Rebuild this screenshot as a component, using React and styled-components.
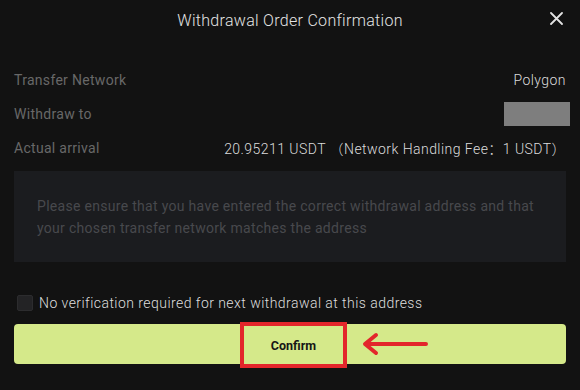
import React, { useState } from "react";
import styled, { createGlobalStyle } from "styled-components";

const GlobalStyle = createGlobalStyle`
  html, body {
    margin: 0;
    padding: 0;
    background: #121212;
  }
  body {
    font-family: "Roboto", "Noto Sans CJK SC", "Liberation Sans", sans-serif;
  }
`;

const rows = [
  { label: "Transfer Network", value: "Polygon" },
  { label: "Withdraw to", masked: true },
  {
    label: "Actual arrival",
    value: "20.95211 USDT （Network Handling Fee：1 USDT）",
  },
];

function App() {
  const [remember, setRemember] = useState(false);

  return (
    <>
      <GlobalStyle />
      <Dialog>
        <Header>
          <span />
          <Title>Withdrawal Order Confirmation</Title>
          <Close aria-label="close">
            <svg width="13" height="13" viewBox="0 0 13 13">
              <path
                d="M1 1 L12 12 M12 1 L1 12"
                stroke="#e2e2e2"
                strokeWidth="1.8"
                strokeLinecap="round"
              />
            </svg>
          </Close>
        </Header>

        <Rows>
          {rows.map((item) => (
            <Row key={item.label}>
              <Label>{item.label}</Label>
              {item.masked ? <Masked /> : <Value>{item.value}</Value>}
            </Row>
          ))}
        </Rows>

        <Notice>
          Please ensure that you have entered the correct withdrawal address and
          that your chosen transfer network matches the address
        </Notice>

        <CheckRow onClick={() => setRemember(!remember)}>
          <Box checked={remember} />
          <CheckText>
            No verification required for next withdrawal at this address
          </CheckText>
        </CheckRow>

        <ButtonWrap>
          <ConfirmButton>Confirm</ConfirmButton>
          <Highlight />
          <Arrow width="70" height="24" viewBox="0 0 70 24">
            <path
              d="M66 12 L6 12 M16 3 L5 12 L16 21"
              stroke="#e3262b"
              strokeWidth="4"
              fill="none"
              strokeLinecap="round"
              strokeLinejoin="round"
            />
          </Arrow>
        </ButtonWrap>
      </Dialog>
    </>
  );
}

export default App;

const Dialog = styled.div`
  width: 580px;
  height: 390px;
  box-sizing: border-box;
  padding: 0 14px;
  background: #121212;
`;

const Header = styled.div`
  display: grid;
  grid-template-columns: 1fr auto 1fr;
  align-items: center;
  height: 40px;
`;

const Title = styled.div`
  color: #e4e4e4;
  font-size: 16px;
  font-weight: 300;
  letter-spacing: 0.3px;
`;

const Close = styled.div`
  justify-self: end;
  display: flex;
  margin-right: 3px;
  margin-top: -3px;
`;

const Rows = styled.div`
  margin-top: 23px;
  display: flex;
  flex-direction: column;
`;

const Row = styled.div`
  display: flex;
  justify-content: space-between;
  align-items: center;
  height: 34px;
`;

const Label = styled.span`
  color: #686868;
  font-size: 14px;
  letter-spacing: 0.3px;
`;

const Value = styled.span`
  color: #dcdcdc;
  font-size: 14px;
  font-weight: 300;
  letter-spacing: 0.45px;
`;

const Masked = styled.div`
  width: 66px;
  height: 24px;
  margin-right: -4px;
  background: #7e7e7e;
`;

const Notice = styled.div`
  margin-top: 6px;
  height: 91px;
  box-sizing: border-box;
  padding: 24px 22px 0 23px;
  background: #1b1c1f;
  color: #48494d;
  font-size: 14px;
  line-height: 22px;
  letter-spacing: 0.3px;
`;

const CheckRow = styled.label`
  display: flex;
  align-items: center;
  gap: 6px;
  margin-top: 33px;
  height: 16px;
  padding-left: 3px;
  cursor: pointer;
`;

const Box = styled.span`
  width: 16px;
  height: 16px;
  box-sizing: border-box;
  border-radius: 2px;
  border: 1px solid #2c2c2e;
  background: ${(props) => (props.checked ? "#d5e98a" : "#232325")};
`;

const CheckText = styled.span`
  color: #dedede;
  font-size: 14px;
  font-weight: 300;
  letter-spacing: 0.45px;
`;

const ButtonWrap = styled.div`
  position: relative;
  margin-top: 13px;
`;

const ConfirmButton = styled.button`
  display: block;
  width: 100%;
  height: 40px;
  border: none;
  border-radius: 4px;
  background: #d5e98a;
  color: #161616;
  font-family: "Roboto", "Liberation Sans", sans-serif;
  font-size: 12.5px;
  font-weight: 700;
  padding: 3px 0 0 7px;
`;

const Highlight = styled.div`
  position: absolute;
  left: 226px;
  top: -2px;
  width: 107px;
  height: 46px;
  box-sizing: border-box;
  border: 4px solid #e3262b;
  pointer-events: none;
`;

const Arrow = styled.svg`
  position: absolute;
  left: 346px;
  top: 8px;
  pointer-events: none;
`;
